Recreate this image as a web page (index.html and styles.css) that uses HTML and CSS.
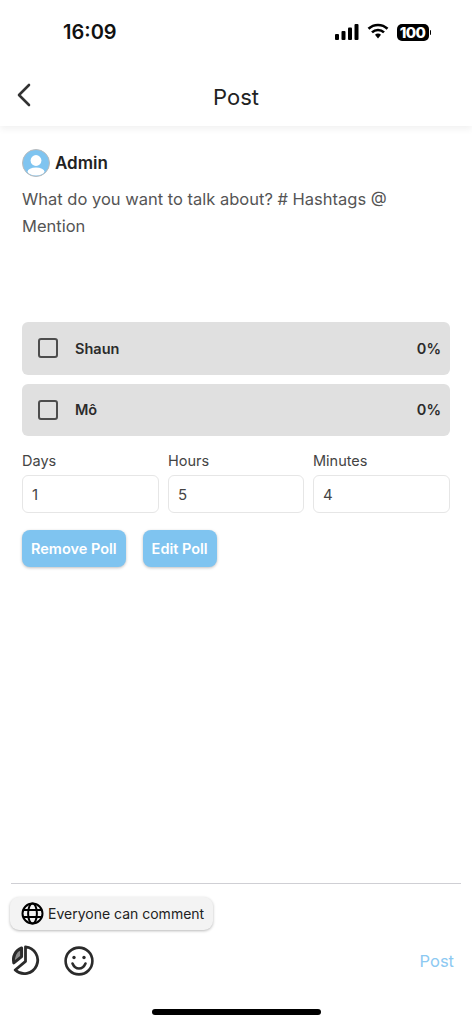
FILE: index.html
```html
<!DOCTYPE html>
<html lang="en">
<head>
<meta charset="utf-8">
<title>Post</title>
<link rel="stylesheet" href="styles.css">
</head>
<body>
<div class="app">
  <div class="status">
    <span class="time">16:09</span>
    <div class="status-icons">
      <svg class="signal" width="24" height="16" viewBox="0 0 24 16"><rect x="0" y="10" width="4" height="6" rx="1"/><rect x="6.5" y="7" width="4" height="9" rx="1"/><rect x="13" y="3.5" width="4" height="12.5" rx="1"/><rect x="19.5" y="0" width="4" height="16" rx="1"/></svg>
      <svg class="wifi" width="22" height="16" viewBox="0 0 22 16"><path d="M1.5 5.8a13.6 13.6 0 0 1 19 0" fill="none" stroke="#000" stroke-width="2.6"/><path d="M5 9.4a8.6 8.6 0 0 1 12 0" fill="none" stroke="#000" stroke-width="2.6"/><path d="M11 10.4a4 4 0 0 1 3 1.3L11 15.4l-3-3.7a4 4 0 0 1 3-1.3z"/></svg>
      <div class="battery"><span class="battery-body">100</span><span class="battery-cap"></span></div>
    </div>
  </div>
  <header class="nav">
    <svg class="back" width="16" height="24" viewBox="0 0 16 24"><path d="M13 2 3 12l10 10" fill="none" stroke="#333" stroke-width="2.6" stroke-linecap="round" stroke-linejoin="round"/></svg>
    <h1 class="nav-title">Post</h1>
  </header>
  <main class="content">
    <div class="author">
      <svg class="avatar" width="28" height="28" viewBox="0 0 28 28"><defs><clipPath id="av"><circle cx="14" cy="14" r="13"/></clipPath></defs><circle cx="14" cy="14" r="13.5" fill="#7fc4f0" stroke="#bbb" stroke-width="1"/><circle cx="14" cy="11.5" r="5.4" fill="#fff"/><ellipse cx="14" cy="22.5" rx="8.4" ry="4" fill="#fff" clip-path="url(#av)"/></svg>
      <span class="author-name">Admin</span>
    </div>
    <p class="placeholder">What do you want to talk about? # Hashtags @ Mention</p>
    <div class="poll">
      <div class="option"><span class="check"></span><span class="option-label">Shaun</span><span class="option-pct">0%</span></div>
      <div class="option"><span class="check"></span><span class="option-label">Mô</span><span class="option-pct">0%</span></div>
    </div>
    <div class="duration">
      <div class="field"><span class="field-label">Days</span><div class="field-box">1</div></div>
      <div class="field"><span class="field-label">Hours</span><div class="field-box">5</div></div>
      <div class="field"><span class="field-label">Minutes</span><div class="field-box">4</div></div>
    </div>
    <div class="actions">
      <button class="btn">Remove Poll</button>
      <button class="btn">Edit Poll</button>
    </div>
  </main>
  <footer class="composer">
    <div class="divider"></div>
    <div class="chip">
      <svg width="23" height="23" viewBox="0 0 23 23" fill="none" stroke="#000" stroke-width="2"><circle cx="11.5" cy="11.5" r="10"/><ellipse cx="11.5" cy="11.5" rx="4.4" ry="10"/><path d="M2.3 8h18.4M2.3 15h18.4"/></svg>
      <span>Everyone can comment</span>
    </div>
    <div class="tools">
      <svg width="31" height="31" viewBox="0 0 31 31" fill="none" stroke="#2b2b2b" stroke-width="2.8" stroke-linejoin="round" stroke-linecap="round"><path d="M14.5 1.8A13.4 13.4 0 1 1 4.2 25l10.300-8.600z"/><path d="M10.600 3v8.600l-7.800 6.200C1.400 11.800 4.400 5.400 10.600 3z" fill="#2b2b2b" fill-opacity="0.55" stroke-width="3"/></svg>
      <svg class="smile" width="30" height="30" viewBox="0 0 30 30" fill="none" stroke="#2b2b2b" stroke-width="2.600" stroke-linecap="round"><circle cx="15" cy="15" r="13.400"/><path d="M8.500 17.500c1.500 3.500 3.800 5 6.500 5s5-1.500 6.500-5"/><circle cx="10" cy="11.500" r="1.700" fill="#2b2b2b" stroke="none"/><circle cx="20" cy="11.500" r="1.700" fill="#2b2b2b" stroke="none"/></svg>
      <span class="post-link">Post</span>
    </div>
    <div class="home-wrap"><div class="home-bar"></div></div>
  </footer>
</div>
</body>
</html>
```
FILE: styles.css
```css
* { box-sizing: border-box; }
html, body { margin: 0; padding: 0; background: #fff; }
body { font-family: Inter, "Noto Sans", "Liberation Sans", sans-serif; color: #222; }
.app { width: 472px; height: 1024px; display: flex; flex-direction: column; overflow: hidden; }

.status { height: 64px; padding: 18px 41px 0 63px; display: flex; justify-content: space-between; align-items: flex-start; }
.time { font-size: 20px; font-weight: 600; line-height: 28px; color: #111; }
.status-icons { display: flex; align-items: center; gap: 8px; height: 28px; }
.signal { fill: #000; margin-top: -1px; }
.wifi { fill: #000; margin-top: -2px; }
.battery { display: flex; align-items: center; gap: 1px; }
.battery-body { width: 32px; height: 17px; background: #000; color: #fff; border-radius: 5px; font-size: 15px; font-weight: 800; line-height: 17px; text-align: center; letter-spacing: -0.6px; }
.battery-cap { width: 1.5px; height: 5px; background: #000; border-radius: 0 2px 2px 0; }

.nav { height: 62px; position: relative; display: flex; align-items: center; justify-content: center; padding-top: 3px; box-shadow: 0 3px 7px rgba(0,0,0,0.06); clip-path: inset(0 0 -14px 0); }
.back { position: absolute; left: 16px; top: 19px; }
.nav-title { margin: 0; font-size: 22px; font-weight: 400; line-height: 28px; color: #222; }

.content { flex: 1; padding: 23px 22px 0; }
.author { display: flex; align-items: center; gap: 5px; height: 28px; }
.avatar { flex: none; }
.author-name { font-size: 17px; font-weight: 600; color: #222; }
.placeholder { margin: 9px 0 0; height: 136px; font-size: 16.500px; line-height: 26.500px; color: #555; }

.poll { display: flex; flex-direction: column; gap: 9px; }
.option { height: 52.500px; background: #e0e0e0; border-radius: 6px; padding: 0 9px 0 16px; display: flex; align-items: center; }
.check { width: 20px; height: 20px; border: 2.500px solid #4d4d4d; border-radius: 3px; flex: none; }
.option-label { margin-left: 17px; font-size: 14.500px; font-weight: 600; color: #2b2b2b; flex: 1; }
.option-pct { font-size: 14.500px; font-weight: 600; color: #2b2b2b; }

.duration { display: grid; grid-template-columns: 137px 136px 1fr; gap: 9px; margin-top: 16px; }
.field { display: flex; flex-direction: column; gap: 5px; }
.field-label { font-size: 14.500px; line-height: 18px; color: #444; }
.field-box { height: 38px; border: 1px solid #e6e6e6; border-radius: 6px; padding: 0 9px; font-size: 15px; line-height: 37px; color: #444; }

.actions { display: flex; gap: 17px; margin-top: 17px; }
.btn { height: 37px; padding: 0 9px; border: 0; border-radius: 8px; background: #7fc4f0; color: #fff; font-family: inherit; font-size: 14.500px; font-weight: 600; box-shadow: 0 1px 3px rgba(0,0,0,0.25); }

.composer { flex: none; padding: 0 11px; }
.divider { height: 1px; background: #cfcfd4; }
.chip { display: inline-flex; align-items: center; gap: 4px; height: 33px; margin: 13px 0 0 -1px; padding: 0 9px 0 11px; background: #f3f3f3; border-radius: 9px; box-shadow: 0 1px 3px rgba(0,0,0,0.28); font-size: 14px; color: #222; }
.tools { display: flex; align-items: center; height: 31px; margin-top: 15px; }
.smile { margin-left: 22px; }
.post-link { margin-left: auto; margin-right: 7px; font-size: 16.500px; color: #8cc9f2; }
.home-wrap { display: flex; justify-content: center; padding: 33px 0 9px; }
.home-bar { width: 169px; height: 6px; border-radius: 3px; background: #000; }
```
